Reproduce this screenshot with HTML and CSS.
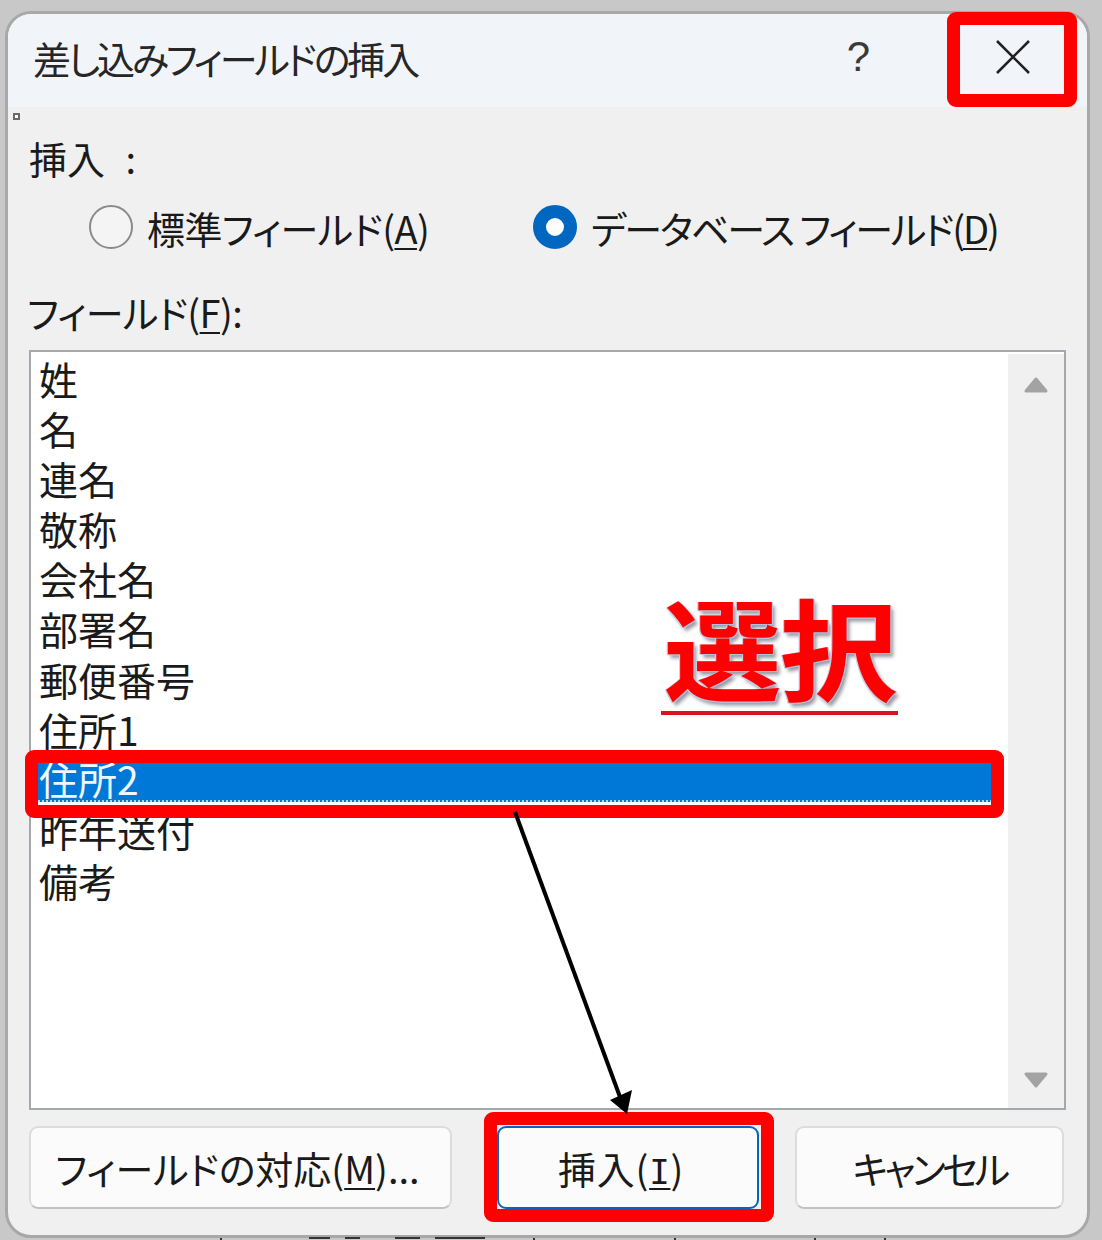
FILE: index.html
```html
<!DOCTYPE html>
<html lang="ja">
<head>
<meta charset="utf-8">
<title>差し込みフィールドの挿入</title>
<link rel="stylesheet" href="styles.css">
</head>
<body>
<div class="stage">
  <div class="dialog">
    <header class="titlebar">
      <span class="title">差し込みフィールドの挿入</span>
      <span class="help">?</span>
      <svg class="close" viewBox="0 0 34 34" aria-hidden="true"><path d="M1 1 L33 33 M33 1 L1 33"/></svg>
    </header>
    <main class="body">
      <div class="label label-insert">挿入 :</div>
      <div class="radios">
        <label class="option option-std"><span class="radio"></span><span>標準フィールド(<u>A</u>)</span></label>
        <label class="option option-db"><span class="radio on"></span><span>データベース フィールド(<u>D</u>)</span></label>
      </div>
      <div class="label field-label">フィールド(<u>F</u>):</div>
      <div class="list">
        <ul class="rows">
          <li>姓</li>
          <li>名</li>
          <li>連名</li>
          <li>敬称</li>
          <li>会社名</li>
          <li>部署名</li>
          <li>郵便番号</li>
          <li>住所1</li>
          <li class="selected">住所2</li>
          <li>昨年送付</li>
          <li>備考</li>
        </ul>
        <div class="scrollbar">
          <svg class="arrow" viewBox="0 0 26 18" aria-hidden="true"><path d="M13 3 L23 15 L3 15 Z"/></svg>
          <svg class="arrow" viewBox="0 0 26 18" aria-hidden="true"><path d="M3 3 L23 3 L13 15 Z"/></svg>
        </div>
      </div>
      <div class="buttons">
        <button class="btn btn-map">フィールドの対応(<u>M</u>)...</button>
        <button class="btn btn-insert">挿入(<u class="serif-i">I</u>)</button>
        <button class="btn btn-cancel">キャンセル</button>
      </div>
    </main>
  </div>

  <span class="speck"></span>
  <div class="mark mark-close"></div>
  <div class="mark mark-row"></div>
  <div class="mark mark-insert"></div>
  <svg class="pointer" viewBox="0 0 1102 1240" aria-hidden="true">
    <path class="pointer-line" d="M515 812 L620 1097"/>
    <path class="pointer-head" d="M610 1100 L632 1090 L627 1114 Z"/>
    <path class="peek" d="M221 1238V1240 M309 1238H330 M345 1238H360 M395 1238H420 M435 1238H485 M534 1238V1240 M675 1238V1240 M815 1238V1240 M885 1238V1240"/>
  </svg>
  <div class="callout"><span class="callout-text">選択</span></div>
</div>
</body>
</html>
```

FILE: styles.css
```css
* { box-sizing: border-box; }

html, body {
  margin: 0;
  height: 1240px;
  overflow: hidden;
}

body {
  background: #c8c8c8;
  font-family: "Noto Sans CJK JP", "Noto Sans", sans-serif;
  font-feature-settings: "palt";
  color: #1a1a1a;
}

.stage {
  position: relative;
  width: 1102px;
  height: 1240px;
  padding: 11px 0 0 5px;
}

.dialog {
  width: 1085px;
  height: 1227px;
  border: 3px solid #a8a8a8;
  border-radius: 26px;
  background: #f0f0f0;
  overflow: hidden;
}

.titlebar {
  height: 93px;
  background: #f1f4f9;
  display: flex;
  align-items: center;
  padding: 0 57px 7px 25px;
}

.title { font-size: 38px; letter-spacing: -3.1px; flex: 1; color: #262626; }
.help { font-size: 42px; color: #3a3a3a; margin-right: 126px; font-family: "Liberation Sans", sans-serif; }
.close { width: 34px; height: 34px; }
.close path { stroke: #222; stroke-width: 2.6; fill: none; }

.body { padding: 28px 21px 0; }

.label { height: 50px; line-height: 46px; font-size: 38px; }
.label-insert { word-spacing: 12px; }
.field-label { margin: 33px 0 0 -2px; letter-spacing: -.6px; }

u { text-underline-offset: 4px; text-decoration-thickness: 2px; }

.serif-i { font-family: "DejaVu Sans Mono", monospace; font-size: 34px; }

.radios {
  margin-top: 15px;
  height: 56px;
  padding-left: 60px;
  display: grid;
  grid-template-columns: 444px auto;
  align-items: center;
}

.option {
  display: flex;
  align-items: center;
  column-gap: 14px;
  font-size: 38px;
  line-height: 54px;
}

.option-std { letter-spacing: -.6px; }
.option-db { letter-spacing: -2.1px; }

.radio {
  width: 44px;
  height: 44px;
  margin-top: -2px;
  border-radius: 50%;
  border: 2px solid #8a8a8a;
  background: #f4f4f4;
  flex: none;
}

.radio.on { border: 13px solid #0067c0; background: #fff; }

.list {
  margin-top: 11px;
  height: 760px;
  border: 2px solid #a4a8ad;
  background: #fff;
  display: flex;
}

.rows {
  list-style: none;
  margin: 0;
  padding: 1px 16px 0 7px;
  flex: 1;
  font-size: 39px;
}

.rows li { height: 50.1px; line-height: 50px; padding-left: 1px; }

.rows li.selected {
  height: 41px;
  line-height: 35px;
  margin: 7px 0 3px;
  background: #0078d7;
  color: #eef6ff;
  border-bottom: 2px dotted #b9d4ee;
}

.scrollbar {
  width: 56px;
  margin-top: 2px;
  background: #f0f0f0;
  display: flex;
  flex-direction: column;
  justify-content: space-between;
  align-items: center;
  padding: 22px 0 19px;
}

.arrow { width: 26px; height: 18px; }
.arrow path { fill: #a3a3a3; stroke: #a3a3a3; stroke-width: 3; stroke-linejoin: round; }

.buttons { margin-top: 16px; height: 83px; display: flex; }

.btn {
  height: 83px;
  font: inherit;
  font-size: 38px;
  color: inherit;
  background: #fbfbfb;
  border: 2px solid #dcdcdc;
  border-bottom-color: #c2c2c2;
  border-radius: 9px;
  padding: 0;
}

.btn-map { width: 423px; padding-right: 6px; }
.btn-insert { width: 262px; margin-left: 45px; padding-right: 14px; border-color: #0067c0; letter-spacing: .8px; }
.btn-cancel { width: 269px; margin-left: 36px; letter-spacing: -3.6px; }

/* annotations drawn on top of the screenshot */
.speck {
  position: absolute;
  left: 13px;
  top: 113px;
  width: 7px;
  height: 7px;
  border: 2px solid #6a6a6a;
  background: #fff;
}

.mark {
  position: absolute;
  border: 13px solid #fe0000;
  border-radius: 9px;
}

.mark-close { left: 947px; top: 12px; width: 130px; height: 95px; }
.mark-row { left: 25px; top: 750px; width: 979px; height: 68px; }
.mark-insert { left: 484px; top: 1112px; width: 290px; height: 110px; }

.pointer { position: absolute; inset: 0; width: 1102px; height: 1240px; pointer-events: none; }
.pointer-line { stroke: #000; stroke-width: 4; fill: none; }
.pointer-head { fill: #000; }
.peek { stroke: #333; stroke-width: 2; fill: none; }

.callout {
  position: absolute;
  left: 661px;
  top: 576px;
  width: 237px;
  height: 139px;
  text-align: center;
  font-size: 118px;
  line-height: 140px;
  font-weight: 700;
  letter-spacing: -2px;
  color: #fe0000;
  border-bottom: 4px solid #d8141c;
}

.callout-text {
  display: inline-block;
  transform: scaleY(.93);
  text-shadow: 1px 1px 0 #b9bedb, -1px -1px 0 #c9cde4, 1px -1px 0 #c9cde4, -1px 1px 0 #c9cde4, 3px 4px 4px rgba(70, 70, 90, .55);
}
```
